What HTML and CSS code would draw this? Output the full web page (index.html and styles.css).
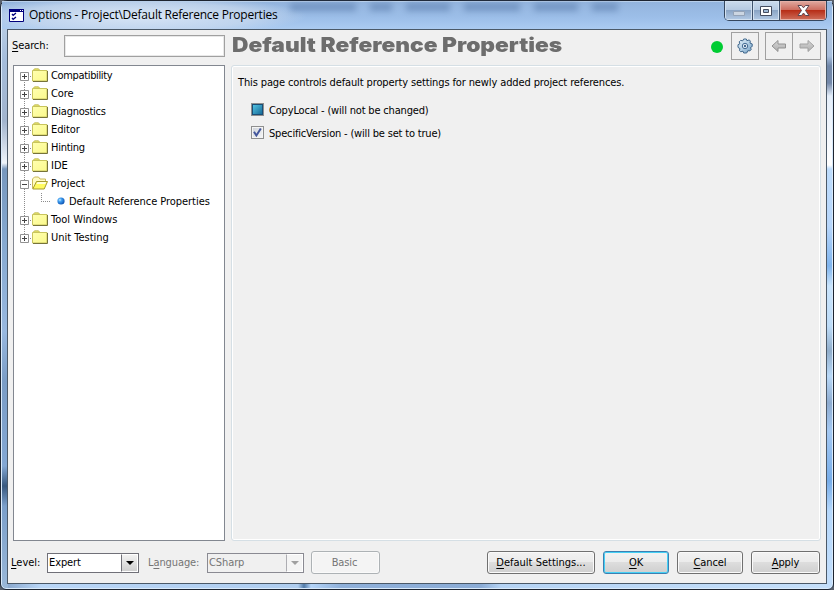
FILE: index.html
```html
<!DOCTYPE html>
<html lang="en">
<head>
<meta charset="utf-8">
<title>Options</title>
<link rel="stylesheet" href="styles.css">
</head>
<body>
<svg class="defs" width="0" height="0" aria-hidden="true">
  <defs>
    <linearGradient id="fold" x1="0" y1="0" x2="1" y2="1"><stop offset="0" stop-color="#ffffb0"/><stop offset="1" stop-color="#fbf98c"/></linearGradient>
    <radialGradient id="ball" cx=".35" cy=".35" r=".7"><stop offset="0" stop-color="#c8ecff"/><stop offset=".35" stop-color="#3f9ef0"/><stop offset="1" stop-color="#0a4fb0"/></radialGradient>
    <linearGradient id="gear" x1="0" y1="0" x2="1" y2="1"><stop offset="0" stop-color="#e2eff8"/><stop offset=".5" stop-color="#b2cfe4"/><stop offset="1" stop-color="#6f9bc0"/></linearGradient>
    <linearGradient id="arr" x1="0" y1="0" x2="0" y2="1"><stop offset="0" stop-color="#d6d6d6"/><stop offset="1" stop-color="#adadad"/></linearGradient>
    <symbol id="folder" viewBox="0 0 16 15">
      <path d="M1 2.500 2.500 .8h4l1.500 1.700z" fill="#e6e26a" stroke="#b9b44a" stroke-width=".8"/>
      <path d="M.5 2.500h14.500v10.500H.5z" fill="url(#fold)" stroke="#c8c45c"/>
      <path d="M1 13.500h14.500V3" fill="none" stroke="#76733a"/>
    </symbol>
    <symbol id="folder-open" viewBox="0 0 16 15">
      <path d="M.5 12.500V3L2.500 1h4L8 3h5.500V6.500" fill="#fffbc0" stroke="#c9b95a"/>
      <path d="M.8 13 4.500 5.500h11L12.200 13z" fill="#fffb60" stroke="#a59b30"/>
      <path d="M5.300 6.500h8.700M4.800 7.500h8.700" stroke="#ffffd8"/>
    </symbol>
    <symbol id="plus" viewBox="0 0 9 9"><path d="M.5.5h8v8h-8z" fill="#fff" stroke="#919191"/><path d="M2 4.500h5M4.500 2v5" stroke="#444"/></symbol>
    <symbol id="minus" viewBox="0 0 9 9"><path d="M.5.5h8v8h-8z" fill="#fff" stroke="#919191"/><path d="M2 4.500h5" stroke="#444"/></symbol>
  </defs>
</svg>
<div class="window">
  <header class="titlebar">
    <svg class="app-icon" width="15" height="13" viewBox="0 0 15 13"><path d="M.5.5h14v12H.5z" fill="#fff" stroke="#00007c"/><path d="M0 0h15v3H0z" fill="#00007c"/><path d="M11 1.500h1M13 1.500h1" stroke="#fff"/><path d="M3 5l1.200 1.300L7 4M3 9l1.200 1.300L7 8" fill="none" stroke="#00007c" stroke-width="1.300"/></svg>
    <span class="caption">Options - Project\Default Reference Properties</span>
    <div class="backdrop" aria-hidden="true"><i></i><i></i><i></i><i></i><i></i><i></i></div>
    <div class="controls">
      <span class="ctl min"><svg width="12" height="5"><path d="M.5.5h11v4H.5z" fill="#ccd6e2" stroke="#94a3b7"/></svg></span>
      <span class="ctl max"><svg width="12" height="10"><path d="M.5.5h11v9H.5z" fill="#fff" stroke="#454d60"/><path d="M3.500 3.500h5v3h-5z" fill="#9fb9d6" stroke="#454d60"/></svg></span>
      <span class="ctl close"><svg width="13" height="11" viewBox="0 0 13 11"><path d="M1 .5h3.500l2 2.300 2-2.300H12L8.500 5.500l3.500 5H8.500l-2-2.500-2 2.500H1l3.500-5z" fill="#fff" stroke="#5b4550"/></svg></span>
    </div>
  </header>
  <main class="client">
    <div class="columns">
      <aside class="side">
        <div class="search"><label><u>S</u>earch:</label><span class="field"></span></div>
        <ul class="tree">
          <li><svg class="exp"><use href="#plus"/></svg><svg class="fold"><use href="#folder"/></svg><span class="tight">Compatibility</span></li>
          <li><svg class="exp"><use href="#plus"/></svg><svg class="fold"><use href="#folder"/></svg><span>Core</span></li>
          <li><svg class="exp"><use href="#plus"/></svg><svg class="fold"><use href="#folder"/></svg><span class="snug">Diagnostics</span></li>
          <li><svg class="exp"><use href="#plus"/></svg><svg class="fold"><use href="#folder"/></svg><span>Editor</span></li>
          <li><svg class="exp"><use href="#plus"/></svg><svg class="fold"><use href="#folder"/></svg><span class="snug">Hinting</span></li>
          <li><svg class="exp"><use href="#plus"/></svg><svg class="fold"><use href="#folder"/></svg><span class="wide">IDE</span></li>
          <li><svg class="exp"><use href="#minus"/></svg><svg class="fold"><use href="#folder-open"/></svg><span class="wide">Project</span></li>
          <li class="leaf"><i class="elbow"></i><svg class="dot" width="8" height="8"><circle cx="4" cy="4" r="3.600" fill="url(#ball)"/></svg><span>Default Reference Properties</span></li>
          <li><svg class="exp"><use href="#plus"/></svg><svg class="fold"><use href="#folder"/></svg><span class="wide">Tool Windows</span></li>
          <li><svg class="exp"><use href="#plus"/></svg><svg class="fold"><use href="#folder"/></svg><span class="wide">Unit Testing</span></li>
        </ul>
      </aside>
      <section class="page">
        <div class="page-head">
          <h1><span>Default Reference Properties</span></h1>
          <span class="status"></span>
          <span class="tool gear"><svg width="16" height="16" viewBox="0 0 16 16"><path d="M6.700 1h2.600l.6 1.700 2.400-.8 1 1.200-.3 2 2.200.8V8.500l-1.700 1 .7 2-1.300 1.400-2.100-.2L9.700 15H6.700L6 13.200l-2.300.6-1.200-1.200.4-2L1 9.400V6.700l1.800-.9-.6-2 1.400-1.400 2.200.4z" fill="url(#gear)" stroke="#41688d"/><circle cx="8" cy="8" r="2.700" fill="#e9f2fa" stroke="#456d94"/><circle cx="8" cy="8" r="1.200" fill="#41688d"/></svg></span>
          <span class="nav">
            <span class="tool"><svg width="16" height="14" viewBox="0 0 16 14"><path d="M1 7l6-5.500V5h7.500v4H7v3.500z" fill="url(#arr)" stroke="#929292"/></svg></span>
            <span class="tool"><svg width="16" height="14" viewBox="0 0 16 14"><path d="M15 7L9 1.500V5H1v4h8v3.500z" fill="url(#arr)" stroke="#a2a2a2"/></svg></span>
          </span>
        </div>
        <div class="panel">
          <p>This page controls default property settings for newly added project references.</p>
          <div class="check"><span class="box mixed"></span><span>CopyLocal - (will not be changed)</span></div>
          <div class="check"><span class="box"><svg width="11" height="11" viewBox="0 0 11 11"><path d="M2 4.800l2.400 3.700L8.800 1.500" fill="none" stroke="#43569c" stroke-width="2"/></svg></span><span>SpecificVersion - (will be set to true)</span></div>
        </div>
      </section>
    </div>
    <footer class="bottom">
      <span class="level"><u>L</u>evel:</span>
      <span class="combo"><span>Expert</span><b></b></span>
      <span class="language">L<u>a</u>nguage:</span>
      <span class="combo off"><span>CSharp</span><b></b></span>
      <span class="btn basic">Basic</span>
      <span class="btn defaults"><span><u>D</u>efault Settings...</span></span>
      <span class="btn ok"><span><u>O</u>K</span></span>
      <span class="btn cancel"><span><u>C</u>ancel</span></span>
      <span class="btn apply"><span><u>A</u>pply</span></span>
    </footer>
  </main>
</div>
</body>
</html>
```
FILE: styles.css
```css
* { box-sizing: border-box; }
body {
  margin: 0;
  width: 834px;
  height: 590px;
  overflow: hidden;
  background: #59606c;
  color: #000;
  font: 11px/16px "DejaVu Sans Condensed", "DejaVu Sans", sans-serif;
  font-stretch: condensed;
  letter-spacing: -0.1px;
  white-space: nowrap;
}
.defs { position: absolute; }
svg { display: block; flex: none; }
u { text-underline-offset: 2px; text-decoration-thickness: 1px; }
.window {
  width: 834px;
  height: 590px;
  padding: 0 6px 5px;
  border: 1px solid #1d2430;
  border-radius: 7px 7px 6px 6px;
  background:
    linear-gradient(#b8cce4 0, #a9c0de 55px, #7087a9 65px, #7489aa 82px, #e4eefa 95px, #fff 164px, #bddcfc 168px, #b7d6fb 225px, #80b5ee 265px, #c9e4fc 285px, #bddcf8 325px, #91aecb 350px, #b9d9f8 375px, #8eacd0 402px, #a4c9f3 430px, #77ade9 480px, #b5d8fc 510px, #c3defb) right / 7px 100% no-repeat,
    linear-gradient(#c6d8eb 0, #a5bddb 60px, #a2b4cd 120px, #eff4fa 162px, #7797bd 168px, #86a9d0 240px, #98b8df 330px, #7b9dc6 380px, #83a7d3 465px, #39597f 485px, #7b9fca 505px, #9ab8d8) left / 7px 100% no-repeat,
    linear-gradient(90deg, #82a0c6 0, #b9d6f7 40px, #afcdef 297px, #527ba8 303px, #b4d4f8 310px, #8fb0da 340px, #8bacd6 480px, #b5d3f4 500px, #c5dffa) bottom / 100% 7px no-repeat,
    #a7c3e6;
  box-shadow: inset 0 0 0 1px #d9eafb;
}
.titlebar {
  display: flex;
  height: 28px;
  margin: 0 -5px;
  padding-left: 7px;
  position: relative;
  background:
    radial-gradient(ellipse 170px 20px at 135px 14px, #d9e6f6 0, rgba(202,218,238,.7) 70%, rgba(160,190,226,0) 100%),
    linear-gradient(#93b4dd, #9dbfe9 60%, #abcbf1);
  border-top: 1px solid #b8cfea;
}
.app-icon { margin: 7px 5px 0 0; }
.caption { font: 12px/26px "Open Sans", sans-serif; letter-spacing: -0.24px; }
.backdrop { position: absolute; left: 288px; top: 1px; display: flex; gap: 14px; filter: blur(3px); opacity: .45; }
.backdrop i { width: 44px; height: 8px; background: #496c9e; }
.backdrop i:first-child { width: 66px; }
.backdrop i:nth-child(2) { width: 22px; }
.backdrop i:nth-child(4) { width: 56px; }
.backdrop i:last-child { width: 26px; }
.controls {
  display: flex;
  width: 103px;
  height: 20px;
  margin: -1px 5px 0 auto;
  border: 1px solid #35475f;
  border-top: 0;
  border-radius: 0 0 5px 5px;
  overflow: hidden;
  position: relative;
}
.ctl { display: grid; place-items: center; background: linear-gradient(#cbdbed, #b5c9e1 48%, #8ba5c5 50%, #b3cae5); box-shadow: inset 0 0 0 1px #d3e1f0; }
.min { width: 28px; border-right: 1px solid #40536d; padding-top: 5px; }
.max { width: 27px; border-right: 1px solid #40536d; }
.close { flex: 1; background: linear-gradient(#e0aaa1, #cd6e60 46%, #b72e18 50%, #cc6854 95%); box-shadow: inset 0 0 0 1px #e5b0a7; }
.client {
  display: flex;
  flex-direction: column;
  width: 820px;
  height: 555px;
  border: 1px solid #4b5968;
  background: #f0f0f0;
}
.columns { display: flex; height: 512px; padding-left: 4px; gap: 6px; }
.side { width: 213px; }
.search { display: flex; height: 35px; padding-top: 5px; }
.search label { width: 52px; padding-top: 3px; }
.field { width: 161px; height: 22px; border: 1px solid #a0a0a0; background: #fff; box-shadow: inset 0 0 0 1px #e8e8e8; }
.tree {
  height: 476px;
  margin: 0 0 0 1px;
  padding: 1px 0 0 6px;
  list-style: none;
  border: 1px solid #828790;
  background: #fff;
}
.tree li {
  display: flex;
  height: 18px;
  line-height: 18px;
  background:
    repeating-linear-gradient(#8c8c8c 0 1px, transparent 1px 2px) 4px 0 / 1px 18px no-repeat,
    repeating-linear-gradient(90deg, #8c8c8c 0 1px, transparent 1px 2px) 8px 9px / 5px 1px no-repeat;
}
.tree li:first-child { background-position: 4px 9px, 8px 9px; }
.tree li:last-child { background-size: 1px 9px, 5px 1px; }
.tree .leaf { background-size: 1px 18px, 0 0; }
.leaf span { letter-spacing: -0.05px; }
.tight { letter-spacing: -0.35px; }
.snug { letter-spacing: -0.25px; }
.wide { letter-spacing: 0; }
.exp { width: 9px; height: 9px; margin: 5px 3px 0 0; }
.fold { width: 16px; height: 15px; margin: 1px 3px 0 0; }
.elbow { width: 9px; height: 9px; margin-left: 21px; background: repeating-linear-gradient(#8c8c8c 0 1px, transparent 1px 2px) 0 0 / 1px 9px no-repeat, repeating-linear-gradient(90deg, #8c8c8c 0 1px, transparent 1px 2px) 0 8px / 9px 1px no-repeat; }
.dot { margin: 4px 4px 0 7px; }
.page { width: 590px; }
.page-head { display: flex; height: 35px; padding-top: 2px; }
h1 { margin: 0; width: 480px; padding-left: 1px; font: 900 20px/26px Inter, sans-serif; letter-spacing: 0; color: #6d6d6d; }
h1 span { display: inline-block; transform: scaleX(1.138); transform-origin: left; }
.status { width: 12px; height: 12px; margin: 9px 8px 0 0; border-radius: 50%; background: #00cc33; }
.tool { display: grid; place-items: center; width: 28px; height: 28px; border: 1px solid #a0a0a0; }
.nav { display: flex; margin-left: 6px; }
.nav .tool + .tool { border-left-width: 0; }
.panel { height: 476px; padding: 9px 6px; border: 1px solid #d5dfe5; border-radius: 3px; box-shadow: inset 0 0 0 1px #fff; }
.panel p { margin: 0 0 12px; letter-spacing: -0.12px; }
.check { display: flex; height: 23px; padding-left: 13px; line-height: 16px; letter-spacing: -0.18px; }
.box { display: grid; place-items: center; width: 13px; height: 13px; margin: 0 5px 0 0; border: 1px solid #8e8f8f; background: linear-gradient(135deg, #ccd1d8, #f8f8f8); box-shadow: inset 0 0 0 1px #f4f4f4; }
.mixed { background: #f4f4f4; }
.mixed::before { content: ""; width: 9px; height: 9px; border: 1px solid #1a4d76; background: linear-gradient(135deg, #52c3e2, #176b98); }
.bottom { display: flex; align-items: center; height: 41px; padding-left: 3px; }
.level { width: 36px; letter-spacing: 0; }
.combo { display: flex; width: 92px; height: 20px; border: 1px solid #707078; background: #fff; line-height: 18px; }
.combo span { flex: 1; padding-left: 1px; }
.combo b { width: 17px; border: 1px solid #fff; border-left: 1px solid #707078; background: linear-gradient(#f2f2f2, #cfcfcf); display: grid; place-items: center; }
.combo b::after { content: ""; border: 4px solid transparent; border-top: 4px solid #000; border-bottom: 0; }
.language { width: 59px; margin-left: 9px; color: #757575; }
.off { width: 97px; color: #757575; background: #f0f0f0; border-color: #8a8a92; }
.off b { background: #f4f4f4; border-left-color: #adadb2; }
.off b::after { border-top-color: #a0a0a0; }
.btn { display: grid; place-items: center; height: 23px; border: 1px solid #707070; border-radius: 3px; background: linear-gradient(#f2f2f2, #ebebeb 49%, #dddddd 50%, #cfcfcf); box-shadow: inset 0 0 0 1px #fafafa; }
.basic { width: 69px; margin-left: 7px; color: #757575; background: #f4f4f4; border-color: #adb2b5; padding-right: 2px; }
.defaults { width: 108px; margin-left: 107px; letter-spacing: 0; }
.ok { width: 66px; margin-left: 8px; border-color: #3c7fb1; box-shadow: inset 0 0 0 1px #45d0f5; }
.cancel { width: 66px; margin-left: 8px; }
.apply { width: 69px; margin-left: 8px; }
```
